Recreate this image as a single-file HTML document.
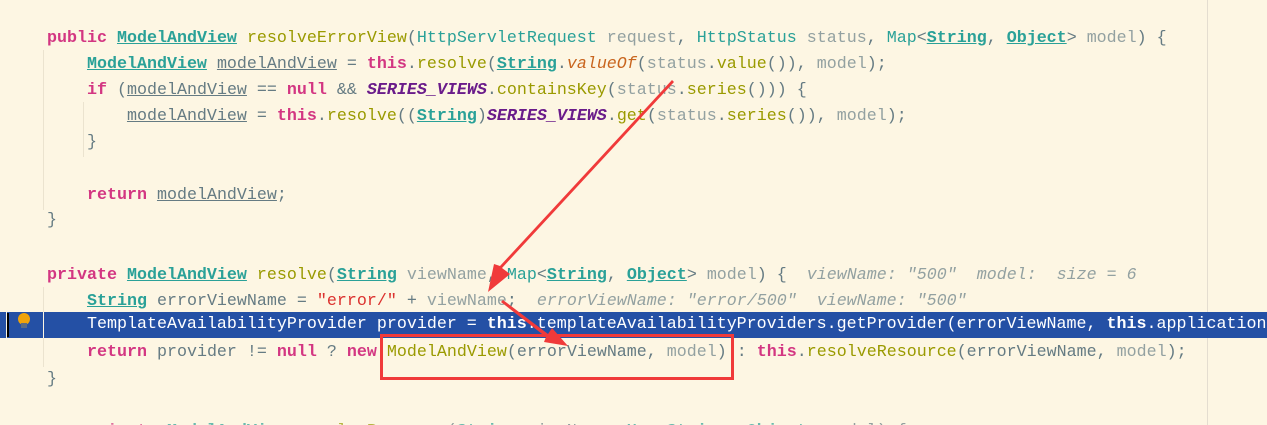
<!DOCTYPE html>
<html><head><meta charset="utf-8"><style>
html,body{margin:0;padding:0;overflow:hidden;width:1267px;height:425px}
body{background:#fdf6e3;position:relative;font-family:"Liberation Mono",monospace;font-size:16.67px;}
.l{position:absolute;left:47px;height:26px;line-height:26px;white-space:pre;color:#657b83}
.k{color:#d33682;font-weight:bold}
.c{color:#2aa198;font-weight:bold;text-decoration:underline}
.ct{color:#2aa198}
.m{color:#9a9a00}
.p{color:#93a1a1}
.u{text-decoration:underline}
.s{color:#dc322f}
.f{color:#6a1b8a;font-weight:bold;font-style:italic}
.i{font-style:italic;color:#c9651e}
.h{font-style:italic;color:#93a1a1}
.g{position:absolute;width:1px;background:#ebe3cf}
</style></head><body>
<div style="position:absolute;left:1207px;top:0;width:1px;height:425px;background:#e4ddd0"></div>
<div class="g" style="left:43px;top:50px;height:160px"></div>
<div class="g" style="left:83px;top:102px;height:55px"></div>
<div class="g" style="left:43px;top:287px;height:80px"></div>
<div style="position:absolute;left:0;top:312px;width:1267px;height:26px;background:#2450a5"></div>
<div style="position:absolute;left:6px;top:312px;width:1px;height:26px;background:#fdf6e3"></div>
<div style="position:absolute;left:43px;top:312px;width:1px;height:26px;background:#fdf6e3"></div>
<div style="position:absolute;left:7px;top:313px;width:2px;height:24px;background:#000"></div>
<div style="position:absolute;left:18px;top:313px;width:12px;height:12px;border-radius:50%;background:#f0a30a"></div>
<div style="position:absolute;left:21px;top:323px;width:6px;height:5px;background:#596b85"></div>

<div class="l" style="top:26px"><span class="k">public</span> <span class="c">ModelAndView</span> <span class="m">resolveErrorView</span>(<span class="ct">HttpServletRequest</span> <span class="p">request</span>, <span class="ct">HttpStatus</span> <span class="p">status</span>, <span class="ct">Map</span>&lt;<span class="c">String</span>, <span class="c">Object</span>&gt; <span class="p">model</span>) {</div>
<div class="l" style="top:52px">    <span class="c">ModelAndView</span> <span class="u">modelAndView</span> = <span class="k">this</span>.<span class="m">resolve</span>(<span class="c">String</span>.<span class="i">valueOf</span>(<span class="p">status</span>.<span class="m">value</span>()), <span class="p">model</span>);</div>
<div class="l" style="top:78px">    <span class="k">if</span> (<span class="u">modelAndView</span> == <span class="k">null</span> &amp;&amp; <span class="f">SERIES_VIEWS</span>.<span class="m">containsKey</span>(<span class="p">status</span>.<span class="m">series</span>())) {</div>
<div class="l" style="top:104px">        <span class="u">modelAndView</span> = <span class="k">this</span>.<span class="m">resolve</span>((<span class="c">String</span>)<span class="f">SERIES_VIEWS</span>.<span class="m">get</span>(<span class="p">status</span>.<span class="m">series</span>()), <span class="p">model</span>);</div>
<div class="l" style="top:130px">    }</div>
<div class="l" style="top:183px">    <span class="k">return</span> <span class="u">modelAndView</span>;</div>
<div class="l" style="top:208px">}</div>
<div class="l" style="top:263px"><span class="k">private</span> <span class="c">ModelAndView</span> <span class="m">resolve</span>(<span class="c">String</span> <span class="p">viewName</span>, <span class="ct">Map</span>&lt;<span class="c">String</span>, <span class="c">Object</span>&gt; <span class="p">model</span>) {  <span class="h">viewName: "500"  model:  size = 6</span></div>
<div class="l" style="top:289px">    <span class="c">String</span> errorViewName = <span class="s">"error/"</span> + <span class="p">viewName</span>;  <span class="h">errorViewName: "error/500"  viewName: "500"</span></div>
<div class="l" style="top:312px;color:#fff;width:1220px;overflow:hidden">    TemplateAvailabilityProvider provider = <b>this</b>.templateAvailabilityProviders.getProvider(errorViewName, <b>this</b>.applicationContext);</div>
<div class="l" style="top:340px">    <span class="k">return</span> provider != <span class="k">null</span> ? <span class="k">new</span> <span class="m">ModelAndView</span>(errorViewName, <span class="p">model</span>) : <span class="k">this</span>.<span class="m">resolveResource</span>(errorViewName, <span class="p">model</span>);</div>
<div class="l" style="top:367px">}</div>
<div style="position:absolute;left:0;top:0;width:1267px;height:425px;overflow:hidden;pointer-events:none">
<div class="l" style="top:419px;opacity:0.7">    <span class="k">private</span> <span class="c">ModelAndView</span> <span class="m">resolveResource</span>(<span class="c">String</span> viewName, <span class="ct">Map</span>&lt;<span class="c">String</span>, <span class="c">Object</span>&gt; model) {</div>
</div>

<div style="position:absolute;left:380px;top:334px;width:348px;height:40px;border:3px solid #f03a3a"></div>
<svg width="1267" height="425" style="position:absolute;left:0;top:0">
<polygon points="672,80 674,82 502,268 510,274 488,292 494,264 500,266" fill="#f03a3a"/>
<polygon points="501,302 503,300 548,334 552,328 568,346 544,342 546,337" fill="#f03a3a"/>
</svg>
</body></html>
